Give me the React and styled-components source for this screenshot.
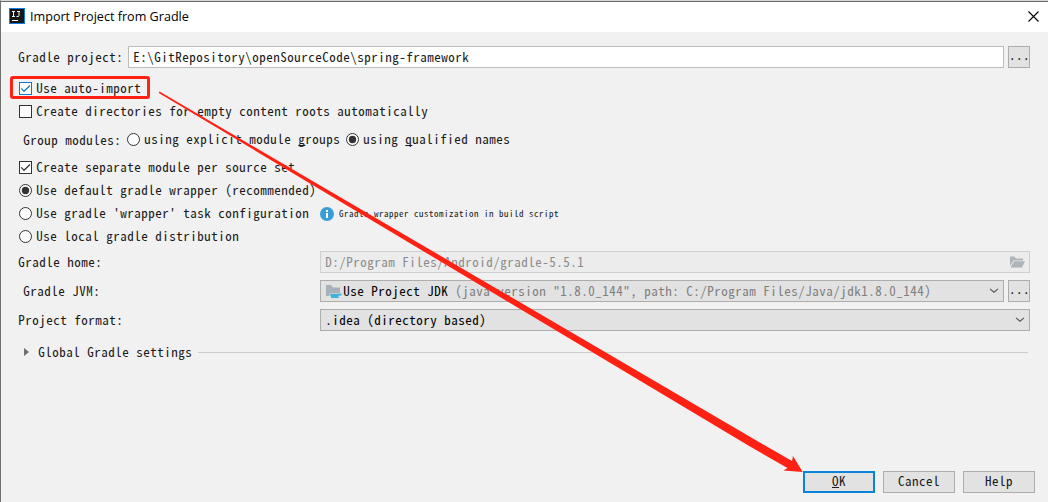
import React from 'react';
import styled, { createGlobalStyle, css } from 'styled-components';

const Global = createGlobalStyle`
  * { box-sizing: border-box; }
  body { margin: 0; background: #f1f1f1; overflow: hidden; }
  svg { flex: none; }
`;

const Dialog = styled.div`
  position: relative;
  width: 1048px;
  height: 502px;
  display: flex;
  flex-direction: column;
  background: #f1f1f1;
  border-left: 1px solid #707070;
  border-top: 1px solid #d9d9d9;
  color: #1a1a1a;
  font-family: 'Noto Sans Mono CJK SC', 'Liberation Mono', monospace;
  font-size: 13px;
  letter-spacing: 0.5px;
  line-height: 22px;
  white-space: pre;
`;

const TitleBar = styled.header`
  height: 31px;
  flex: none;
  display: flex;
  align-items: center;
  padding: 0 9px 2px 8px;
  background: #fff;
  border-top: 1px solid #6b6b6b;
  color: #000;
  font: 13px/20px 'Open Sans', sans-serif;
  letter-spacing: 0;
`;

const Title = styled.span`
  position: relative;
  top: 1px;
  margin-left: 5px;
  flex: 1;
  font-size: 12.6px;
`;

const Body = styled.main`
  flex: 1;
  display: flex;
  flex-direction: column;
  padding: 14px 18px 0 17px;
`;

const Row = styled.div`
  display: flex;
  align-items: center;
  flex: none;
  height: ${p => p.$h || 22}px;
  margin-top: ${p => p.$top || 0}px;
  padding-left: ${p => p.$indent || 0}px;
`;

const Label = styled.span`
  width: ${p => p.$w}px;
  flex: none;
`;

const Text = styled.span`
  position: relative;
  left: 0.3px;
`;

const Option = styled.label`
  display: flex;
  align-items: center;
  gap: 4px;
  margin-right: ${p => p.$gap || 0}px;

  ${Text} {
    top: -0.5px;
  }
`;

const Mnemonic = styled.span`
  text-decoration: underline 1px;
  text-underline-offset: 1px;
  text-decoration-skip-ink: none;
`;

const field = css`
  height: 22px;
  display: flex;
  align-items: center;
  flex: 1;
  line-height: 20px;
`;

const Input = styled.div`
  ${field}
  padding: 0 4px;
  background: ${p => (p.$disabled ? '#ececec' : '#fff')};
  border: 1px solid ${p => (p.$disabled ? '#cfcfcf' : '#bdbdbd')};
  color: ${p => (p.$disabled ? '#8c8c8c' : '#1a1a1a')};
`;

const Select = styled.div`
  ${field}
  padding: 0 4px;
  background: #e2e2e2;
  border: 1px solid #adadad;
  color: #000;
`;

const Fill = styled.span`
  flex: 1;
`;

const Muted = styled.span`
  color: #808080;
`;

const Browse = styled.button`
  width: 22px;
  height: 22px;
  margin-left: 4px;
  padding: 0 0 4px;
  border: 1px solid #adadad;
  background: #e2e2e2;
  font: inherit;
  letter-spacing: inherit;
  line-height: 16px;
  color: #000;
  overflow: hidden;
`;

const Hint = styled.span`
  font-size: 9px;
  margin-left: 5px;
`;

const Rule = styled.span`
  flex: 1;
  height: 1px;
  margin: 0 2px 0 6px;
  background: #cdcdcd;
`;

const Footer = styled.footer`
  display: flex;
  justify-content: flex-end;
  gap: 8px;
  padding: 0 13px 9px;
`;

const Button = styled.button`
  width: 72px;
  height: 22px;
  padding: 0 0 2px;
  border: ${p => (p.$primary ? '2px solid #0a84d9' : '1px solid #adadad')};
  background: #e2e2e2;
  font: inherit;
  letter-spacing: inherit;
  line-height: 16px;
  color: #1a1a1a;
`;

const Highlight = styled.div`
  position: absolute;
  left: 9px;
  top: 75px;
  width: 140px;
  height: 23px;
  border: 3px solid #ff2113;
  border-radius: 3px;
`;

const Arrow = styled.svg`
  position: absolute;
  left: -1px;
  top: -1px;
  pointer-events: none;
`;

const Check = ({ on, color = '#333' }) => (
  <svg width="13" height="13" viewBox="0 0 13 13">
    <rect x=".5" y=".5" width="12" height="12" fill="#fff" stroke={color} />
    {on && <path d="M2.3 6.300 5 9.300 11 3.500" fill="none" stroke={color} strokeWidth="1.2" />}
  </svg>
);

const Radio = ({ on }) => (
  <svg width="13" height="13" viewBox="0 0 13 13">
    <circle cx="6.5" cy="6.5" r="6" fill="#fff" stroke="#333" />
    {on && <circle cx="6.5" cy="6.5" r="3.7" fill="#333" />}
  </svg>
);

const Chevron = () => (
  <svg width="10" height="6" viewBox="0 0 10 6">
    <path d="M1 .8 5 4.2 9 .8" fill="none" stroke="#555" strokeWidth="1.1" />
  </svg>
);

const Logo = () => (
  <svg width="16" height="16" viewBox="0 0 16 16">
    <rect width="16" height="16" fill="#147be0" />
    <rect x="1" y="1" width="14" height="14" fill="#161616" />
    <path d="M3 3.5h3M4.5 3.5v5M3 8.5h3M8 3.5h3M10 3.5v4q0 1-1 1H7.5M3 12.5h6" fill="none" stroke="#fff" />
  </svg>
);

const CloseIcon = () => (
  <svg width="11" height="11" viewBox="0 0 11 11">
    <path d="M.5.5l10 10M10.500.5l-10 10" stroke="#000" strokeWidth="1.1" />
  </svg>
);

const JdkIcon = () => (
  <svg width="18" height="16" viewBox="0 0 18 16">
    <path d="M1 2h5l2 2.500h7v6H4.500V13H1z" fill="#a8b1b7" />
    <path d="M5 11h9.500v-.5H16.500v2h-2.500l-1 1.500h1v1H6v-1z" fill="#3fb2e0" />
  </svg>
);

const FolderIcon = () => (
  <svg width="16" height="12" viewBox="0 0 16 12">
    <path d="M1 .5h4.500l1.500 2H14v2H4.500L1 10z" fill="#adb5ba" />
    <path d="M5 5.300h11L13 11.500H1.500z" fill="#adb5ba" />
  </svg>
);

const InfoIcon = () => (
  <svg width="14" height="14" viewBox="0 0 14 14">
    <circle cx="7" cy="7" r="7" fill="#389fd6" />
    <path d="M6 3h2v2H6zM6 6h2v5H6z" fill="#fff" />
  </svg>
);

export default function App() {
  return (
    <>
      <Global />
      <Dialog>
        <TitleBar>
          <Logo />
          <Title>Import Project from Gradle</Title>
          <CloseIcon />
        </TitleBar>
        <Body>
          <Row>
            <Label $w={110}><Text>Gradle project:</Text></Label>
            <Input><Text>E:\GitRepository\openSourceCode\spring-framework</Text></Input>
            <Browse>...</Browse>
          </Row>
          <Row $h={23} $top={9} $indent={1}>
            <Option><Check on color="#0a78d4" /><Text>Use auto-import</Text></Option>
          </Row>
          <Row $h={23} $indent={1}>
            <Option><Check /><Text>Create directories for empty content roots automatically</Text></Option>
          </Row>
          <Row $h={23} $top={5} $indent={5}>
            <Label $w={104}><Text>Group modules:</Text></Label>
            <Option $gap={6}><Radio /><Text>using explicit module <Mnemonic>g</Mnemonic>roups</Text></Option>
            <Option><Radio on /><Text>using <Mnemonic>q</Mnemonic>ualified names</Text></Option>
          </Row>
          <Row $h={23} $top={5} $indent={1}>
            <Option><Check on /><Text>Create separate module per source set</Text></Option>
          </Row>
          <Row $h={23} $indent={1}>
            <Option><Radio on /><Text>Use default gradle wrapper (recommended)</Text></Option>
          </Row>
          <Row $h={23} $indent={1}>
            <Option $gap={11}><Radio /><Text>Use gradle 'wrapper' task configuration</Text></Option>
            <InfoIcon />
            <Hint>Gradle wrapper customization in build script</Hint>
          </Row>
          <Row $h={23} $indent={1}>
            <Option><Radio /><Text>Use local gradle distribution</Text></Option>
          </Row>
          <Row $top={3}>
            <Label $w={302}><Text>Gradle home:</Text></Label>
            <Input $disabled><Fill><Text>D:/Program Files/Android/gradle-5.5.1</Text></Fill><FolderIcon /></Input>
          </Row>
          <Row $top={7} $indent={5}>
            <Label $w={297}><Text>Gradle JVM:</Text></Label>
            <Select>
              <JdkIcon />
              <Fill><Text>Use Project JDK <Muted>(java version "1.8.0_144", path: C:/Program Files/Java/jdk1.8.0_144)</Muted></Text></Fill>
              <Chevron />
            </Select>
            <Browse>...</Browse>
          </Row>
          <Row $top={7}>
            <Label $w={302}><Text>Project format:</Text></Label>
            <Select><Fill><Text>.idea (directory based)</Text></Fill><Chevron /></Select>
          </Row>
          <Row $top={10} $indent={6}>
            <svg width="6" height="8" viewBox="0 0 6 8"><path d="M0 0 5 4 0 8z" fill="#6e6e6e" /></svg>
            <Label $w={8} />
            <Text>Global Gradle settings</Text>
            <Rule />
          </Row>
        </Body>
        <Footer>
          <Button $primary><Mnemonic>O</Mnemonic>K</Button>
          <Button>Cancel</Button>
          <Button>Help</Button>
        </Footer>
        <Highlight />
        <Arrow width="1048" height="502" viewBox="0 0 1048 502">
          <path d="M159.500 91.500 755.500 440 792 461 793 456 802.700 472 783.500 470.500 787.500 468 750 446.500 158.800 93z" fill="#ff2113" />
        </Arrow>
      </Dialog>
    </>
  );
}
